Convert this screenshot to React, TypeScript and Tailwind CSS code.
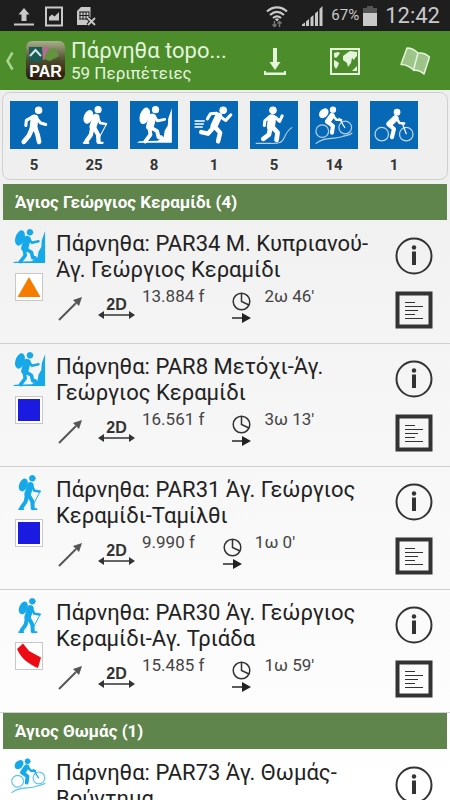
import React from 'react';

interface Marker {
  kind: 'triangle' | 'square' | 'stripe';
}

interface Route {
  title: string;
  activity: 'climb' | 'hike' | 'bikepack';
  marker: Marker['kind'];
  distance: string;
  time: string;
}

const Walk = () => (
  <>
    <circle cx="28" cy="9" r="3.2" fill="currentColor" />
    <path d="M24 17L23 26" strokeWidth="7.5" />
    <path d="M22 15.5L16 19L15.5 24M26 17L30 21.5L35 23" strokeWidth="3" />
    <path d="M24.5 26L27 33L28.5 40M22 26L18.5 34L13.5 40" strokeWidth="4.6" />
  </>
);

const Hike = () => (
  <>
    <circle cx="27.5" cy="8.5" r="3" fill="currentColor" />
    <ellipse cx="18" cy="15.5" rx="4.4" ry="7" transform="rotate(22 18 15.5)" fill="currentColor" stroke="none" />
    <path d="M25.5 16L22.5 25" strokeWidth="6.8" />
    <path d="M27 16L29.5 21.5L35 22.5" strokeWidth="2.6" />
    <path d="M36 22L26.5 40" strokeWidth="1" />
    <path d="M23 25L27.5 33L28 40M22 25L20.5 33L16 39.500" strokeWidth="4.2" />
    <path d="M28 41H32M13.500 41H18" strokeWidth="2" />
  </>
);

const Climb = () => (
  <>
    <circle cx="25" cy="8.5" r="3" fill="currentColor" />
    <ellipse cx="14.5" cy="14.5" rx="4.8" ry="8.4" transform="rotate(18 14.5 14.5)" fill="currentColor" stroke="none" />
    <path d="M22 16L19.5 25" strokeWidth="7.5" />
    <path d="M24 15.5L27 19.5L34 18" strokeWidth="2.6" />
    <path d="M20.5 26L26.5 29.5L28 35.5H30.5M19 26L20 33L15 39.5" strokeWidth="3.8" />
    <path d="M41 7V41H7L9 39.5L27 39L33 35L34 29L37 24L37.5 17Z" fill="currentColor" stroke="none" />
  </>
);

const Run = () => (
  <>
    <circle cx="32.5" cy="9" r="3.2" fill="currentColor" />
    <path d="M28 15L23.5 24.5" strokeWidth="7" />
    <path d="M26 12L20 12.500L17 17.500M30.500 16L35 19L40 13.500" strokeWidth="3" />
    <path d="M24.500 25.500L29.500 31L27.500 39.500M22.500 26.500L17.500 32L11 30.500" strokeWidth="4.4" />
    <path d="M5 19.500H14M5 22.500H13M5 25.500H12" strokeWidth="1.4" />
  </>
);

const TrailRun = () => (
  <>
    <circle cx="22.5" cy="9" r="3.2" fill="currentColor" />
    <path d="M21.5 17L20.5 25" strokeWidth="8" />
    <path d="M19 15.5L14.5 19.5L14 24M25 16L29 20L31.5 14.5" strokeWidth="3" />
    <path d="M22 25.5L27 31L26 38M20 26L18.5 33L13 37" strokeWidth="4.6" />
    <path d="M6 41.500H20C28 41.500 31 42 34 35C36 30 38 28 41 26" strokeWidth="1" opacity=".7" />
  </>
);

const Bike = () => (
  <>
    <circle cx="26.5" cy="11" r="2.8" fill="currentColor" />
    <path d="M25 17L19 22.5" strokeWidth="6" />
    <path d="M26 17L29 21.5L33.5 22" strokeWidth="2.4" />
    <path d="M19.5 24L23.5 27.5L21.5 35.5" strokeWidth="4" />
    <path d="M31.5 21.5L35.5 32" strokeWidth="1.2" />
    <circle cx="11.5" cy="32.5" r="6.6" strokeWidth="1.2" opacity=".75" />
    <circle cx="35.5" cy="32.5" r="6.6" strokeWidth="1.2" opacity=".75" />
  </>
);

const Bikepack = () => (
  <>
    <circle cx="22.5" cy="8.5" r="2.6" fill="currentColor" />
    <ellipse cx="13.500" cy="12" rx="4" ry="5.4" transform="rotate(42 13.5 12)" fill="currentColor" stroke="none" />
    <path d="M21.5 14.5L17.5 20" strokeWidth="5.6" />
    <path d="M23 15L26 18.5L30.5 18.5" strokeWidth="2.4" />
    <path d="M18 21L22.5 24.5L21.5 31" strokeWidth="4" />
    <path d="M28.5 17L34 26" strokeWidth="1.2" />
    <circle cx="12" cy="29.5" r="6.2" strokeWidth="1.2" opacity=".7" />
    <circle cx="34.500" cy="26" r="6.2" strokeWidth="1.2" opacity=".7" />
    <path d="M6 41.500C14 34.500 22 38 31 35C35 33.500 38 34 41 31.500" strokeWidth="1.2" opacity=".7" />
  </>
);

const Pictogram: React.FC<{ className: string; viewBox?: string; children: React.ReactNode }> = ({
  className,
  viewBox = '0 0 47 47',
  children,
}) => (
  <svg
    viewBox={viewBox}
    className={className}
    fill="none"
    stroke="currentColor"
    strokeLinecap="round"
    strokeLinejoin="round"
    aria-hidden="true"
  >
    {children}
  </svg>
);

const StatusBar = () => (
  <div className="flex h-[31px] shrink-0 items-center justify-between bg-[#1e1e1e] pl-3 pr-2.5 text-[#c9c9c9]">
    <div className="flex items-center gap-2">
      <svg viewBox="0 0 24 22" className="h-[22px] w-6" fill="currentColor">
        <path d="M12 3L17.5 9.5H14.5V16H9.500V9.500H6.500ZM2 18.500H22V20.500H2Z" />
      </svg>
      <svg viewBox="0 0 20 22" className="h-[22px] w-5">
        <rect x="2" y="2.500" width="16" height="18" fill="none" stroke="currentColor" strokeWidth="2" />
        <path d="M5 15.500V12L8 9.500L10.500 11.500L15 7V15.500Z" fill="currentColor" />
      </svg>
      <svg viewBox="0 0 24 22" className="ml-1 h-[22px] w-6">
        <path d="M1 6L5 2H14.500V13L11 20V20H1Z" fill="currentColor" />
        <path d="M3.500 7H13M3.500 10.500H13M3.500 14H13M4 6.500V14.500M7 6.500V14.500M10 6.500V14.500M13 6.500V14.500" stroke="#1e1e1e" strokeWidth="1" />
        <path d="M12 13L19 20M19 13L12 20" stroke="#1e1e1e" strokeWidth="4" />
        <path d="M12 13L19 20M19 13L12 20" stroke="currentColor" strokeWidth="1.800" />
      </svg>
    </div>
    <div className="flex items-center">
      <svg viewBox="0 0 24 24" className="mr-3 h-6 w-6" fill="none" stroke="currentColor">
        <path d="M2 7.500C8 2 16 2 22 7.500M5 11C9.500 7 14.500 7 19 11M8 14C10.500 12 13.500 12 16 14" strokeWidth="2.200" />
        <path d="M12 17L10.500 15H13.500Z" fill="currentColor" />
        <path d="M9.500 17V22M7.500 20.500L9.500 22.500L11.500 20.500M14.500 23V18M12.500 19.500L14.500 17.500L16.500 19.500" stroke="#777" strokeWidth="1.500" />
      </svg>
      <svg viewBox="0 0 22 22" className="mr-2 h-[22px] w-[22px]" fill="currentColor">
        <path d="M1 21V19.500L4 17.500V21ZM5 21V16.500L8 14V21ZM9.500 21V12.500L12.500 10V21ZM14 21V8.500L17 6V21ZM18.500 21V4L21.500 1V21Z" />
      </svg>
      <span className="mr-1 text-[15px]">67%</span>
      <svg viewBox="0 0 14 20" className="mr-2 h-5 w-3.5">
        <path d="M4 0H10V2H14V8H0V2H4Z" fill="#555" />
        <path d="M0 7H14V20H0Z" fill="currentColor" />
      </svg>
      <span className="text-[22px] leading-[30px]">12:42</span>
    </div>
  </div>
);

const TopBar = () => (
  <header className="flex h-[59px] shrink-0 items-center bg-[#4c8c2b] text-[#e4f5dc]">
    <button type="button" aria-label="Back" className="flex items-center pl-1">
      <svg viewBox="0 0 14 20" className="h-5 w-3.5" fill="none" stroke="#a9d68e" strokeWidth="2.5">
        <path d="M8.500 1.500L3.500 10L8.500 18.500" />
      </svg>
    </button>
    <div className="ml-2 flex h-[39px] w-[39px] shrink-0 flex-col justify-end rounded-md bg-linear-to-b from-[#a9b08c] via-[#4d4b2c] to-[#2a1710]">
      <svg viewBox="0 0 39 20" className="h-5 w-full">
        <path d="M3 4H16V19H3Z" fill="#1c5a52" />
        <path d="M4 13L9.500 7L15 13" fill="none" stroke="#cfe9f0" strokeWidth="2" />
        <path d="M17 4H23L18 17H17Z" fill="#b56a9a" />
        <path d="M21 8L29 5L33 13L24 18L18 16Z" fill="#63933f" />
      </svg>
      <span className="text-center font-['Liberation_Sans'] text-base leading-[17px] font-bold text-white">PAR</span>
    </div>
    <div className="ml-1.5 min-w-0 flex-1">
      <h1 className="text-[22px] leading-[25px] whitespace-nowrap">Πάρνηθα topo...</h1>
      <p className="text-[17px] leading-5">59 Περιπέτειες</p>
    </div>
    <nav className="flex gap-10 pr-5 pl-7">
      <button type="button" aria-label="Download">
        <svg viewBox="0 0 30 30" className="h-[30px] w-[30px]" fill="currentColor">
          <path d="M13 2H17V16H20.500L15 24L9.500 16H13ZM4 25H6V26.500H24V25H26V29H4Z" />
        </svg>
      </button>
      <button type="button" aria-label="Map">
        <svg viewBox="0 0 30 30" className="h-[30px] w-[30px]">
          <rect x="1" y="3" width="28" height="25" fill="none" stroke="currentColor" strokeWidth="2" />
          <path d="M4 7L8 6L10 7L8 10L6 12L4 11ZM4 14L6 15L9 17L8 20L6 23L4 20ZM13 10L17 7L20 5L27 6V10L25 12L24 14L22 12L21 17L18 21L17 17L13 14ZM24 23L27 20V25L22 25Z" fill="currentColor" />
        </svg>
      </button>
      <button type="button" aria-label="Guide">
        <svg viewBox="0 0 30 30" className="h-[30px] w-[30px]" stroke="currentColor" strokeWidth="1.500" strokeLinejoin="round">
          <path d="M7 2C11 2 15 4 18 7C22 6.500 26 7.500 29.500 11L24 28C21 25.500 17 24 14 24.500C10 20.500 6 18.500 1 18.500Z" fill="#9fc48a" />
          <path d="M18 7L13.500 24" />
        </svg>
      </button>
    </nav>
  </header>
);

const MarkerBox: React.FC<Marker> = ({ kind }) => (
  <svg viewBox="0 0 28 28" className="h-7 w-7" aria-hidden="true">
    <rect x=".5" y=".5" width="27" height="27" fill="#fff" stroke="#c8c8c8" />
    {kind === 'triangle' && <path d="M14 4L25.500 24H2.500Z" fill="#f57c00" />}
    {kind === 'square' && <rect x="3" y="3" width="22" height="22" fill="#1a1ae0" />}
    {kind === 'stripe' && <path d="M2 7L8 1.500L14 9L26 15.500L23 26C13 22 6 16 2 7Z" fill="#ee0a14" />}
  </svg>
);

const pictograms = {
  climb: <Climb />,
  hike: <Hike />,
  bikepack: <Bikepack />,
};

const RouteRow: React.FC<Route> = ({ title, activity, marker, distance, time }) => (
  <li className="flex h-[123px] border-b border-[#cfcfcf] pt-2">
    <div className="flex w-14 shrink-0 flex-col items-center gap-2 pl-0.5">
      <Pictogram viewBox="6 5 36 38" className="h-9 w-9 text-[#16a9ea]">
        {pictograms[activity]}
      </Pictogram>
      <MarkerBox kind={marker} />
    </div>
    <div className="min-w-0 flex-1 pt-0.5">
      <h3 className="text-[22px] leading-[26px] text-[#222]">{title}</h3>
      <div className="flex items-start text-[17px] leading-[26px] text-[#444]">
        <svg viewBox="0 0 28 28" className="mt-3 h-7 w-7" aria-hidden="true">
          <path d="M3 25L20 8" stroke="#555" strokeWidth="2" />
          <path d="M26 2L23 11L17 5Z" fill="#555" />
        </svg>
        <div className="mt-4 ml-3.5 flex w-[37px] flex-col items-center text-[#333]">
          <span className="font-['Liberation_Sans'] text-base leading-3 font-bold">2D</span>
          <svg viewBox="0 0 37 8" className="h-2 w-full" aria-hidden="true">
            <path d="M4 4H33" stroke="currentColor" strokeWidth="1.500" />
            <path d="M0 4L6 0V8ZM37 4L31 0V8Z" fill="currentColor" />
          </svg>
        </div>
        <span className="ml-[7px]">{distance}</span>
        <svg viewBox="0 0 20 32" className="mt-2 ml-7 h-8 w-5" fill="none" stroke="#333" aria-hidden="true">
          <circle cx="9.500" cy="10.500" r="8.300" strokeWidth="1.500" />
          <path d="M9.500 2.500V10.500L17 14" strokeWidth="1.500" />
          <path d="M0 27H12" strokeWidth="1.600" />
          <path d="M10 22L19 27L10 32Z" fill="#222" stroke="none" />
        </svg>
        <span className="ml-3">{time}</span>
      </div>
    </div>
    <div className="flex w-[73px] shrink-0 flex-col items-center gap-4 pt-2 text-[#333]">
      <button type="button" aria-label="Information">
        <svg viewBox="0 0 38 38" className="h-[38px] w-[38px]" fill="none" stroke="currentColor">
          <circle cx="19" cy="19" r="17.500" strokeWidth="2" />
          <circle cx="19" cy="10.500" r="2.200" fill="currentColor" stroke="none" />
          <path d="M19 14.500V28" strokeWidth="4" />
        </svg>
      </button>
      <button type="button" aria-label="Description">
        <svg viewBox="0 0 38 38" className="h-[38px] w-[38px]" fill="none" stroke="currentColor">
          <rect x="2.500" y="2.500" width="33" height="33" strokeWidth="4" />
          <path d="M10 11.500H20M10 15.500H28M10 19.500H23M10 23.500H20M10 27.500H28" strokeWidth="1.200" />
        </svg>
      </button>
    </div>
  </li>
);

const App: React.FC = () => {
  const activities = [
    { label: 'Walking', icon: <Walk />, count: 5 },
    { label: 'Hiking', icon: <Hike />, count: 25 },
    { label: 'Climbing', icon: <Climb />, count: 8 },
    { label: 'Running', icon: <Run />, count: 1 },
    { label: 'Trail running', icon: <TrailRun />, count: 5 },
    { label: 'Mountain biking', icon: <Bikepack />, count: 14 },
    { label: 'Cycling', icon: <Bike />, count: 1 },
  ];

  const sections: { name: string; routes: Route[] }[] = [
    {
      name: 'Άγιος Γεώργιος Κεραμίδι (4)',
      routes: [
        { title: 'Πάρνηθα: PAR34 Μ. Κυπριανού-Άγ. Γεώργιος Κεραμίδι', activity: 'climb', marker: 'triangle', distance: '13.884 f', time: "2ω 46'" },
        { title: 'Πάρνηθα: PAR8 Μετόχι-Άγ. Γεώργιος Κεραμίδι', activity: 'climb', marker: 'square', distance: '16.561 f', time: "3ω 13'" },
        { title: 'Πάρνηθα: PAR31 Άγ. Γεώργιος Κεραμίδι-Ταμίλθι', activity: 'hike', marker: 'square', distance: '9.990 f', time: "1ω 0'" },
        { title: 'Πάρνηθα: PAR30 Άγ. Γεώργιος Κεραμίδι-Αγ. Τριάδα', activity: 'hike', marker: 'stripe', distance: '15.485 f', time: "1ω 59'" },
      ],
    },
    {
      name: 'Άγιος Θωμάς (1)',
      routes: [
        { title: 'Πάρνηθα: PAR73 Άγ. Θωμάς-Βούντημα', activity: 'bikepack', marker: 'square', distance: '14.210 f', time: "2ω 5'" },
      ],
    },
  ];

  return (
    <div className="flex h-screen flex-col overflow-hidden bg-linear-to-b from-[#ececec] to-white font-[Roboto,sans-serif]">
      <StatusBar />
      <TopBar />
      <div className="mx-0.5 mt-0.5 flex shrink-0 gap-3 rounded-lg border border-[#d0d0d0] bg-[#efefef] px-[7px] pt-2 pb-1">
        {activities.map((item) => (
          <button key={item.label} type="button" aria-label={item.label} className="flex flex-col items-center">
            <Pictogram className="h-12 w-12 bg-[#0768b5] text-white">{item.icon}</Pictogram>
            <span className="mt-1.5 text-[15px] leading-5 font-bold text-[#333]">{item.count}</span>
          </button>
        ))}
      </div>
      <main className="mt-1 min-h-0 flex-1 overflow-y-auto [scrollbar-width:none]">
        {sections.map((section) => (
          <section key={section.name}>
            <h2 className="mx-[3px] h-9 bg-[#5f854c] px-3 text-[17px] leading-9 font-bold text-white">{section.name}</h2>
            <ul className="pt-px">
              {section.routes.map((route) => (
                <RouteRow key={route.title} {...route} />
              ))}
            </ul>
          </section>
        ))}
      </main>
    </div>
  );
};

export default App;
